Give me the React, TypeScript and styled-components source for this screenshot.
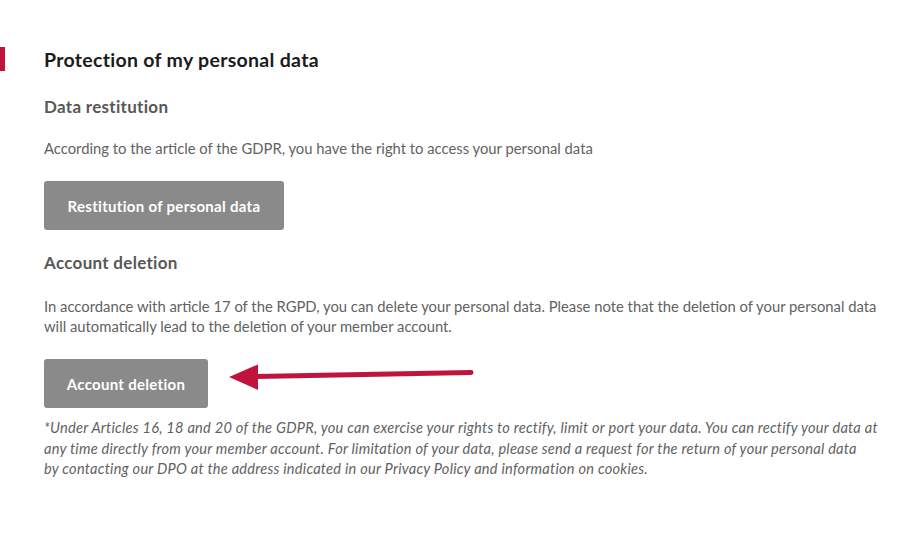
import React from "react";
import styled, { createGlobalStyle } from "styled-components";

const Global = createGlobalStyle`
  html, body { margin: 0; padding: 0; background: #fff; }
  body { font-family: "Lato", "Open Sans", sans-serif; }
`;

const Page = styled.div`
  position: relative;
  width: 921px;
  height: 544px;
  box-sizing: border-box;
  padding: 47px 35px 0 44px;
`;

const Accent = styled.div`
  position: absolute;
  left: 0;
  top: 47px;
  width: 5px;
  height: 24px;
  background: #c0143f;
`;

const Title = styled.h1`
  margin: 0;
  font-size: 19.5px;
  line-height: 26px;
  letter-spacing: 0.3px;
  font-weight: 700;
  color: #1b1b1b;
`;

const Heading = styled.h2<{ $top: number }>`
  margin: ${(p) => p.$top}px 0 0;
  font-size: 17px;
  line-height: 24px;
  letter-spacing: 0.3px;
  font-weight: 700;
  color: #575757;
`;

const Text = styled.p<{ $top: number }>`
  margin: ${(p) => p.$top}px 0 0;
  font-size: 14.8px;
  line-height: 20px;
  color: #626262;
`;

const Note = styled.p`
  margin: 10px 0 0;
  font-size: 14.6px;
  line-height: 20.5px;
  letter-spacing: 0.24px;
  font-style: italic;
  color: #626262;
`;

const ButtonRow = styled.div<{ $top: number }>`
  display: flex;
  align-items: center;
  margin-top: ${(p) => p.$top}px;
`;

const Button = styled.button<{ $w: number }>`
  width: ${(p) => p.$w}px;
  height: 49px;
  border: none;
  border-radius: 3px;
  background: #8a8a8a;
  color: #fff;
  font-family: inherit;
  font-size: 15px;
  letter-spacing: 0.3px;
  font-weight: 700;
  padding: 0;
  cursor: pointer;
`;

const Arrow = styled.svg`
  margin-left: 20px;
  margin-bottom: 14px;
`;

export default function App() {
  return (
    <>
      <Global />
      <Page>
        <Accent />
        <Title>Protection of my personal data</Title>
        <Heading $top={22}>Data restitution</Heading>
        <Text $top={19}>According to the article of the GDPR, you have the right to access your personal data</Text>
        <ButtonRow $top={23}>
          <Button $w={240}>Restitution of personal data</Button>
        </ButtonRow>
        <Heading $top={21}>Account deletion</Heading>
        <Text $top={21}>
          In accordance with article 17 of the RGPD, you can delete your personal data. Please note that the deletion of your personal data will automatically lead to the deletion of your member account.
        </Text>
        <ButtonRow $top={23}>
          <Button $w={164}>Account deletion</Button>
          <Arrow width="250" height="30" viewBox="0 0 250 30">
            <path d="M28 14.5 L243 10.5" stroke="#c0143f" strokeWidth="5" strokeLinecap="round" fill="none" />
            <path d="M1 15 L30 2.5 L30 28 Z" fill="#c0143f" />
          </Arrow>
        </ButtonRow>
        <Note>
          *Under Articles 16, 18 and 20 of the GDPR, you can exercise your rights to rectify, limit or port your data. You can rectify your data at
          <br />
          any time directly from your member account. For limitation of your data, please send a request for the return of your personal data
          <br />
          by contacting our DPO at the address indicated in our Privacy Policy and information on cookies.
        </Note>
      </Page>
    </>
  );
}
